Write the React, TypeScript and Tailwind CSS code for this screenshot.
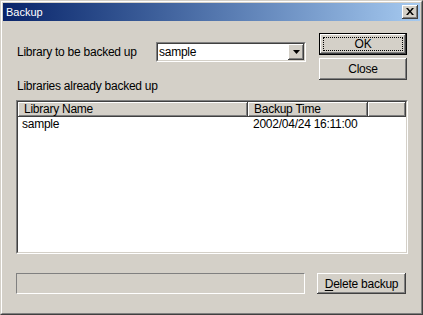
import React from 'react'

const raised =
  'shadow-[inset_-1px_-1px_#404040,inset_1px_1px_#ffffff,inset_-2px_-2px_#808080,inset_2px_2px_#d4d0c8]'

const Sunken = ({ className, children }: { className: string; children: React.ReactNode }) => (
  <div className={`border border-t-[#808080] border-l-[#808080] border-b-white border-r-white ${className}`}>
    <div className="flex h-full w-full flex-col border border-t-[#404040] border-l-[#404040] border-b-[#d4d0c8] border-r-[#d4d0c8] bg-white">
      {children}
    </div>
  </div>
)

const Button = ({ children, isDefault }: { children: React.ReactNode; isDefault?: boolean }) => (
  <button
    className={`relative flex h-[22px] w-[88px] items-center justify-center bg-[#d4d0c8] text-black ${
      isDefault ? 'border border-black' : ''
    }`}>
    <span className={`absolute inset-0 ${raised}`} />
    {isDefault && <span className="absolute inset-[3px] border border-dotted border-black" />}
    <span className="relative">{children}</span>
  </button>
)

export default function App() {
  return (
    <div
      className="h-[315px] w-[423px] border border-t-[#d4d0c8] border-l-[#d4d0c8] border-b-[#404040] border-r-[#404040] bg-[#d4d0c8] text-[12px] tracking-[-0.25px] text-black"
      style={{ fontFamily: '"Liberation Sans", Arial, sans-serif' }}>
      <div className="flex h-full flex-col border border-t-white border-l-white border-b-[#808080] border-r-[#808080] p-px">
        <div className="flex h-[18px] items-center justify-between bg-gradient-to-r from-[#0a246a] to-[#a6caf0] pl-[3px] pr-[2px]">
          <span className="text-[11px] tracking-normal text-white">Backup</span>
          <div className={`flex h-[14px] w-[16px] items-center justify-center bg-[#d4d0c8] ${raised}`}>
            <svg width="8" height="7" viewBox="0 0 8 7" className="-mt-px">
              <path d="M0 0h2l2 2.5L6 0h2L5 3.5 8 7H6L4 4.5 2 7H0l3-3.5z" fill="#000" />
            </svg>
          </div>
        </div>

        <div className="flex flex-1 flex-col pl-[13px] pr-[14px]">
          <div className="mt-[12px] flex">
            <div className="flex flex-1 items-start">
              <div className="mt-[9px] flex h-[20px] items-center pl-px">
                <span className="w-[139px]">Library to be backed up</span>
                <Sunken className="h-[20px] w-[150px]">
                  <div className="flex h-full items-center">
                    <span className="flex-1 pl-[1px]">sample</span>
                    <div className={`flex h-[16px] w-[16px] items-center justify-center bg-[#d4d0c8] ${raised}`}>
                      <svg width="7" height="4" viewBox="0 0 7 4">
                        <path d="M0 0h7L3.5 4z" fill="#000" />
                      </svg>
                    </div>
                  </div>
                </Sunken>
              </div>
            </div>
            <div className="-mr-px flex flex-col gap-[3px]">
              <Button isDefault>OK</Button>
              <Button>Close</Button>
            </div>
          </div>

          <div className="-mt-px h-[14px] pl-px leading-[14px]">Libraries already backed up</div>

          <Sunken className="mt-[7px] h-[154px] w-[392px]">
            <div className="flex h-[15px] bg-[#d4d0c8] leading-[14px]">
              <div className={`w-[230px] pl-[6px] ${raised}`}>Library Name</div>
              <div className={`w-[120px] pl-[6px] ${raised}`}>Backup Time</div>
              <div className={`flex-1 ${raised}`} />
            </div>
            <div className="flex h-[14px] leading-[14px]">
              <div className="w-[230px] pl-[4px]">sample</div>
              <div className="pl-[5px]">2002/04/24 16:11:00</div>
            </div>
          </Sunken>

          <div className="mt-[19px] flex items-center justify-between">
            <div className="h-[21px] w-[289px] border border-t-[#808080] border-l-[#808080] border-b-white border-r-white" />
            <button className={`flex h-[21px] w-[89px] items-center justify-center bg-[#d4d0c8] ${raised}`}>
              <span>
                <span className="underline underline-offset-2">D</span>elete backup
              </span>
            </button>
          </div>
        </div>
      </div>
    </div>
  )
}
